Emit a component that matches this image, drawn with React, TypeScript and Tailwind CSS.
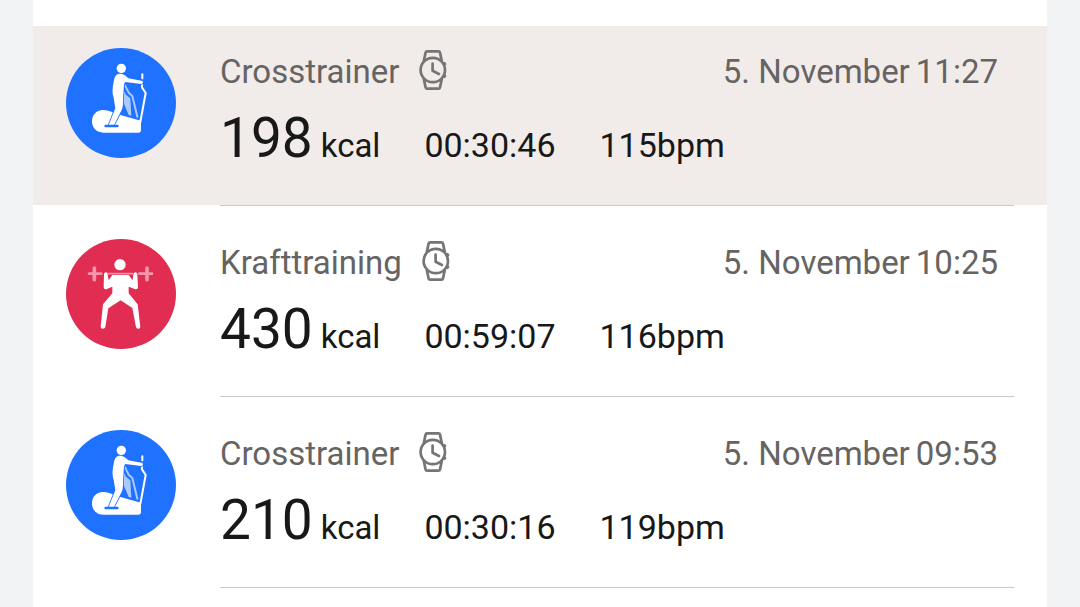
import React from "react";

type Sport = "Crosstrainer" | "Krafttraining";

interface Workout {
    sport: Sport;
    kcal: number;
    duration: string;
    bpm: number;
    date: string;
    time: string;
    selected?: boolean;
}

const workouts: Workout[] = [
    {sport: "Crosstrainer", kcal: 198, duration: "00:30:46", bpm: 115, date: "5. November", time: "11:27", selected: true},
    {sport: "Krafttraining", kcal: 430, duration: "00:59:07", bpm: 116, date: "5. November", time: "10:25"},
    {sport: "Crosstrainer", kcal: 210, duration: "00:30:16", bpm: 119, date: "5. November", time: "09:53"},
];

const CrosstrainerIcon = () => (
    <svg viewBox="0 0 330 330" className="size-[110px] shrink-0" aria-hidden="true">
        <circle cx="165" cy="165" r="165" fill="#1f72ff"/>
        {/* far leg and far lever */}
        <path d="M172 124 L180 140 L193 151 L196 203 L188 201 L170 158 Z" fill="#a9c9ff"/>
        <path d="M177 112 L188 134 L199 144 L214 206" fill="none" stroke="#a9c9ff" strokeWidth="6" strokeLinecap="round" strokeLinejoin="round"/>
        {/* machine body */}
        <path d="M111 186 C90 186 78 202 78 220 C78 240 92 254 112 254 H217 Q225 254 225 246 V218 L166 202 L142 194 C132 189 122 186 111 186 Z" fill="#fff"/>
        <path d="M229 79 V91 M228 98 V118 L239 135 L223 222" fill="none" stroke="#fff" strokeWidth="6" strokeLinecap="round" strokeLinejoin="round"/>
        {/* person */}
        <path
            d="M160 77 C149 78 145 88 143 101 C139 119 138 136 143 150 L148 181 L128 231 L143 233 L168 184 C171 177 171 164 171 153 L174 108 L178 102 L226 108 Q231 107 231 103 Q231 99 226 98 L187 91 C180 84 173 76 160 77 Z"
            fill="#fff"
            stroke="#1f72ff"
            strokeWidth="5"
            paintOrder="stroke"
        />
        <circle cx="166" cy="61" r="14" fill="#fff"/>
        <path d="M119 234 H154" stroke="#1f72ff" strokeWidth="8" strokeLinecap="round"/>
    </svg>
);

const StrengthIcon = () => (
    <svg viewBox="0 0 330 330" className="size-[110px] shrink-0" aria-hidden="true">
        <circle cx="165" cy="165" r="165" fill="#e12d51"/>
        {/* barbell */}
        <g fill="none" stroke="#f596ab" strokeLinecap="round">
            <path d="M69 104 H106 M220 104 H258" strokeWidth="8"/>
            <path d="M127 104 H200" strokeWidth="5"/>
            <path d="M85 87 V122 M243 87 V122" strokeWidth="11"/>
        </g>
        <circle cx="162" cy="77" r="17" fill="#fff"/>
        <path
            d="M139 108 H188 L200 124 L202 106 Q203 100 208 100 Q214 100 214 106 L216 144 Q216 152 208 151 L188 143 L188 163 L215 196 L223 263 Q223 269 217 269 Q211 269 210 264 L199 207 L164 184 L127 208 L118 264 Q117 269 110 269 Q104 269 104 263 L111 196 L139 163 L139 143 L121 151 Q113 152 113 144 L114 106 Q114 100 120 100 Q125 100 125 106 L128 124 Z"
            fill="#fff"
        />
    </svg>
);

const WatchIcon = () => (
    <svg viewBox="0 0 28 40" className="mb-1 h-10 w-7 shrink-0" fill="none" stroke="#777574" strokeWidth="2.7" strokeLinecap="round" strokeLinejoin="round" role="img" aria-label="Watch">
        <path d="M4.8 11 L6.6 2.6 Q6.9 1.4 8.1 1.4 H19.5 Q20.7 1.4 21 2.6 L22.8 11"/>
        <path d="M4.8 29 L6.6 37.4 Q6.9 38.6 8.1 38.6 H19.5 Q20.7 38.6 21 37.4 L22.8 29"/>
        <circle cx="13.8" cy="20" r="12.2"/>
        <path d="M25.2 13.2 L26 14 M25.2 26.8 L26 26"/>
        <path d="M13.6 13.6 V20.8 L20 24"/>
    </svg>
);

const WorkoutRow = ({workout}: { workout: Workout }) => (
    <li className="mb-[11px]">
        <div className={`flex gap-11 pl-[33px] pr-[49px] ${workout.selected ? "bg-[#f1ecea]" : "bg-white"}`}>
            <div className="pt-[22px]">
                {workout.sport === "Crosstrainer" ? <CrosstrainerIcon/> : <StrengthIcon/>}
            </div>
            <div className="flex-1 pt-[26px] pb-[35px]">
                <div className="flex h-10 items-center justify-between text-[33px] leading-10 text-[#666463]">
                    <div className="flex items-center gap-5">
                        <h2>{workout.sport}</h2>
                        <WatchIcon/>
                    </div>
                    <div className="flex gap-1.5">
                        <span>{workout.date}</span>
                        <span>{workout.time}</span>
                    </div>
                </div>
                <div className="mt-3.5 flex h-16 items-baseline text-[33px] leading-16 text-[#181818]">
                    <p className="mr-11 flex items-baseline gap-2">
                        <span className="text-[55px]">{workout.kcal}</span>
                        <span>kcal</span>
                    </p>
                    <p className="mr-11 text-[34px]">{workout.duration}</p>
                    <p className="text-[34px]">{workout.bpm}bpm</p>
                </div>
            </div>
        </div>
        <hr className="mr-[33px] ml-[187px] border-t border-[#c9c9c9]"/>
    </li>
);

const App = () => {
    return (
        <div className="min-h-screen bg-[#f1f3f5] px-[33px] font-[Roboto,sans-serif]">
            <main className="min-h-screen bg-white pt-[26px]">
                <ul>
                    {workouts.map((workout) => (
                        <WorkoutRow key={workout.time} workout={workout}/>
                    ))}
                </ul>
            </main>
        </div>
    );
};

export default App;
